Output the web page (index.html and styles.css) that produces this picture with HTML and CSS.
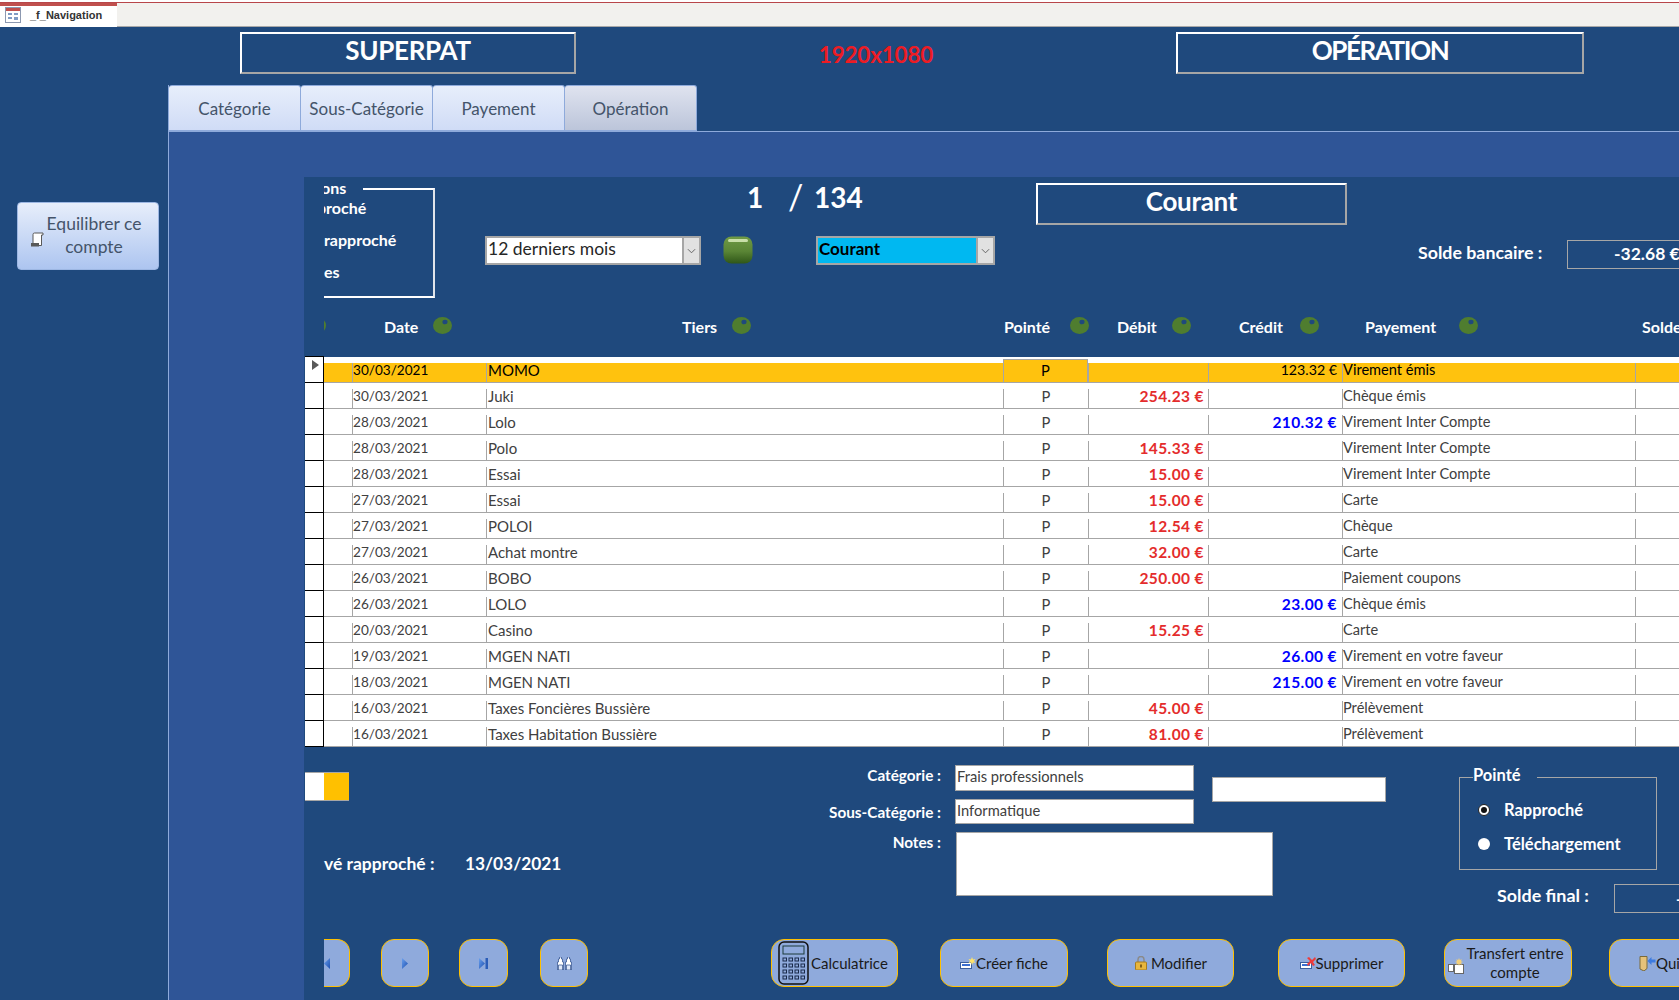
FILE: index.html
```html
<!DOCTYPE html>
<html lang="fr">
<head>
<meta charset="utf-8">
<title>_f_Navigation</title>
<link rel="stylesheet" href="styles.css">
</head>
<body>
<svg class="defs" width="0" height="0" aria-hidden="true">
  <defs>
    <linearGradient id="tri" x1="0" y1="0" x2="1" y2="1"><stop offset="0" stop-color="#6aa0ee"/><stop offset="1" stop-color="#1c4fb0"/></linearGradient>
    <symbol id="olive" viewBox="0 0 19 17">
      <ellipse cx="9.5" cy="8.5" rx="9.5" ry="8.5" fill="#4f7d2f"/>
      <ellipse cx="12" cy="5" rx="2.6" ry="2.3" fill="#1f497d"/>
    </symbol>
  </defs>
</svg>

<header class="topbar">
  <div class="doc-tab">
    <svg class="doc-icon" viewBox="0 0 16 16"><rect x=".5" y=".5" width="15" height="15" fill="#fff" stroke="#8c98b0"/><rect x="1" y="1" width="14" height="3" fill="#c0504d"/><path d="M3 6h4v2H3zM3 10h4v2H3zM9 6h4v2H9zM9 10h4v3H9z" fill="#7f9bc4"/></svg>
    <span>_f_Navigation</span>
  </div>
</header>

<section class="titles">
  <div class="title-box title-super">SUPERPAT</div>
  <div class="resolution">1920x1080</div>
  <div class="title-box title-oper">OPÉRATION</div>
</section>

<main class="workspace">
  <aside class="side">
    <button class="balance-btn">
      <svg class="scroll-icon" viewBox="0 0 14 15"><path d="M3 13V2.500A1.500 1.500 0 0 1 4.500 1H13v2h-1.500v10.500H3z" fill="#fff" stroke="#595959"/><rect x="1" y="11" width="8" height="3.500" fill="#595959"/></svg>
      <span>Equilibrer ce compte</span>
    </button>
  </aside>

  <div class="content">
    <nav class="tabs">
      <div class="tab">Catégorie</div>
      <div class="tab">Sous-Catégorie</div>
      <div class="tab">Payement</div>
      <div class="tab tab-active">Opération</div>
    </nav>

    <div class="panel">
      <div class="form">
        <div class="filters">
          <div class="group">
            <div class="opt opt-legend"><span class="cut3">ons</span></div>
            <div class="opt opt-1"><span class="cut6">proché</span></div>
            <div class="opt opt-2"><span>rapproché</span></div>
            <div class="opt opt-2"><span>es</span></div>
          </div>
          <div class="filter-main">
            <div class="filter-top">
              <div class="counter"><span class="c-cur">1</span><span class="c-sep">/</span><span>134</span></div>
              <div class="title-box account-box">Courant</div>
            </div>
            <div class="filter-bottom">
              <div class="combo combo-period"><span class="combo-text">12 derniers mois</span><span class="combo-btn"><svg viewBox="0 0 10 6"><path d="M1 1l4 4 4-4" fill="none" stroke="#595959"/></svg></span></div>
              <svg class="green-btn" viewBox="0 0 30 28">
                <defs><linearGradient id="gb" x1="0" y1="0" x2="0" y2="1"><stop offset="0" stop-color="#6f9a45"/><stop offset=".55" stop-color="#5a8535"/><stop offset="1" stop-color="#2f5618"/></linearGradient></defs>
                <rect x=".5" y=".5" width="29" height="27" rx="8" fill="url(#gb)"/>
                <rect x="5" y="3" width="20" height="3" rx="1.500" fill="#c9dfa9"/>
              </svg>
              <div class="combo combo-account"><span class="combo-text">Courant</span><span class="combo-btn"><svg viewBox="0 0 10 6"><path d="M1 1l4 4 4-4" fill="none" stroke="#595959"/></svg></span></div>
              <div class="bank-label">Solde bancaire :</div>
              <div class="bank-value">-32.68 €</div>
            </div>
          </div>
        </div>

        <div class="col-heads">
          <svg class="olive olive-cut" viewBox="17 0 2 17"><use href="#olive" width="19" height="17"/></svg>
          <span>Date</span><svg class="olive"><use href="#olive"/></svg>
          <span>Tiers</span><svg class="olive"><use href="#olive"/></svg>
          <span>Pointé</span><svg class="olive"><use href="#olive"/></svg>
          <span>Débit</span><svg class="olive"><use href="#olive"/></svg>
          <span>Crédit</span><svg class="olive"><use href="#olive"/></svg>
          <span>Payement</span><svg class="olive"><use href="#olive"/></svg>
          <span>Solde</span>
        </div>

        <div class="table">
          <div class="row row-current"><div class="sel sel-current"></div><div class="cell first"></div><div class="cell date">30/03/2021</div><div class="cell">MOMO</div><div class="cell pt focus">P</div><div class="cell"></div><div class="cell amt plain">123.32 €</div><div class="cell">Virement émis</div><div class="cell"></div></div>
          <div class="row"><div class="sel"></div><div class="cell first"></div><div class="cell date">30/03/2021</div><div class="cell">Juki</div><div class="cell pt">P</div><div class="cell amt deb">254.23 €</div><div class="cell"></div><div class="cell">Chèque émis</div><div class="cell"></div></div>
          <div class="row"><div class="sel"></div><div class="cell first"></div><div class="cell date">28/03/2021</div><div class="cell">Lolo</div><div class="cell pt">P</div><div class="cell"></div><div class="cell amt cre">210.32 €</div><div class="cell">Virement Inter Compte</div><div class="cell"></div></div>
          <div class="row"><div class="sel"></div><div class="cell first"></div><div class="cell date">28/03/2021</div><div class="cell">Polo</div><div class="cell pt">P</div><div class="cell amt deb">145.33 €</div><div class="cell"></div><div class="cell">Virement Inter Compte</div><div class="cell"></div></div>
          <div class="row"><div class="sel"></div><div class="cell first"></div><div class="cell date">28/03/2021</div><div class="cell">Essai</div><div class="cell pt">P</div><div class="cell amt deb">15.00 €</div><div class="cell"></div><div class="cell">Virement Inter Compte</div><div class="cell"></div></div>
          <div class="row"><div class="sel"></div><div class="cell first"></div><div class="cell date">27/03/2021</div><div class="cell">Essai</div><div class="cell pt">P</div><div class="cell amt deb">15.00 €</div><div class="cell"></div><div class="cell">Carte</div><div class="cell"></div></div>
          <div class="row"><div class="sel"></div><div class="cell first"></div><div class="cell date">27/03/2021</div><div class="cell">POLOI</div><div class="cell pt">P</div><div class="cell amt deb">12.54 €</div><div class="cell"></div><div class="cell">Chèque</div><div class="cell"></div></div>
          <div class="row"><div class="sel"></div><div class="cell first"></div><div class="cell date">27/03/2021</div><div class="cell">Achat montre</div><div class="cell pt">P</div><div class="cell amt deb">32.00 €</div><div class="cell"></div><div class="cell">Carte</div><div class="cell"></div></div>
          <div class="row"><div class="sel"></div><div class="cell first"></div><div class="cell date">26/03/2021</div><div class="cell">BOBO</div><div class="cell pt">P</div><div class="cell amt deb">250.00 €</div><div class="cell"></div><div class="cell">Paiement coupons</div><div class="cell"></div></div>
          <div class="row"><div class="sel"></div><div class="cell first"></div><div class="cell date">26/03/2021</div><div class="cell">LOLO</div><div class="cell pt">P</div><div class="cell"></div><div class="cell amt cre">23.00 €</div><div class="cell">Chèque émis</div><div class="cell"></div></div>
          <div class="row"><div class="sel"></div><div class="cell first"></div><div class="cell date">20/03/2021</div><div class="cell">Casino</div><div class="cell pt">P</div><div class="cell amt deb">15.25 €</div><div class="cell"></div><div class="cell">Carte</div><div class="cell"></div></div>
          <div class="row"><div class="sel"></div><div class="cell first"></div><div class="cell date">19/03/2021</div><div class="cell">MGEN NATI</div><div class="cell pt">P</div><div class="cell"></div><div class="cell amt cre">26.00 €</div><div class="cell">Virement en votre faveur</div><div class="cell"></div></div>
          <div class="row"><div class="sel"></div><div class="cell first"></div><div class="cell date">18/03/2021</div><div class="cell">MGEN NATI</div><div class="cell pt">P</div><div class="cell"></div><div class="cell amt cre">215.00 €</div><div class="cell">Virement en votre faveur</div><div class="cell"></div></div>
          <div class="row"><div class="sel"></div><div class="cell first"></div><div class="cell date">16/03/2021</div><div class="cell">Taxes Foncières Bussière</div><div class="cell pt">P</div><div class="cell amt deb">45.00 €</div><div class="cell"></div><div class="cell">Prélèvement</div><div class="cell"></div></div>
          <div class="row"><div class="sel"></div><div class="cell first"></div><div class="cell date">16/03/2021</div><div class="cell">Taxes Habitation Bussière</div><div class="cell pt">P</div><div class="cell amt deb">81.00 €</div><div class="cell"></div><div class="cell">Prélèvement</div><div class="cell"></div></div>
        </div>

        <div class="details">
          <div class="d-left">
            <div class="flag"><span class="flag-white"></span><span class="flag-orange"></span></div>
            <div class="statement"><span class="statement-label">vé rapproché :</span><span class="statement-date">13/03/2021</span></div>
          </div>
          <div class="d-fields">
            <label class="f-label f-l1">Catégorie :</label>
            <div class="field f-i1">Frais professionnels</div>
            <div class="field f-extra"></div>
            <label class="f-label f-l2">Sous-Catégorie :</label>
            <div class="field f-i2">Informatique</div>
            <label class="f-label f-l3">Notes :</label>
            <div class="field f-notes"></div>
          </div>
          <div class="d-right">
            <fieldset class="pointe">
              <legend>Pointé</legend>
              <div class="radio-row"><span class="radio radio-on"></span><span>Rapproché</span></div>
              <div class="radio-row"><span class="radio"></span><span>Téléchargement</span></div>
            </fieldset>
            <div class="final"><span class="final-label">Solde final :</span><span class="final-value">-</span></div>
          </div>
        </div>

        <div class="actions">
          <button class="btn nav-cut"><svg class="ic-nav" viewBox="0 0 6 11"><path d="M6 0v11L0 5.500z" fill="url(#tri)"/></svg></button>
          <button class="btn nav b-next"><svg class="ic-nav" viewBox="0 0 6 11"><path d="M0 0v11l6-5.500z" fill="url(#tri)"/></svg></button>
          <button class="btn nav b-last"><svg class="ic-last" viewBox="0 0 9 11"><path d="M0 0v11l6-5.500z" fill="url(#tri)"/><rect x="6.500" width="2.500" height="11" fill="#2a5cb8"/></svg></button>
          <button class="btn nav b-find"><svg class="ic-bino" viewBox="0 0 15 13"><path d="M2.500 0h2v2h1v3h1v8H.5V5h1V2h1zM10.500 0h2v2h1v3h1v8h-6V5h1V2h1z" fill="#fff" stroke="#2a4a8a" stroke-width=".7"/><path d="M1.500 8h4v5h-4zM9.500 8h4v5h-4z" fill="#dfe8f8" stroke="#2a4a8a" stroke-width=".7"/></svg></button>
          <button class="btn cmd b-calc">
            <svg class="ic-calc" viewBox="0 0 31 44">
              <rect x="1" y="1" width="29" height="42" rx="5" fill="#8faadc" stroke="#111" stroke-width="1.500"/>
              <rect x="5" y="5" width="21" height="8" fill="#8faadc" stroke="#1c3a3a"/>
              <g fill="none" stroke="#1a2a4a"><rect x="5" y="17" width="3.500" height="3"/><rect x="11" y="17" width="3.500" height="3"/><rect x="17" y="17" width="3.500" height="3"/><rect x="23" y="17" width="3.500" height="3"/><rect x="5" y="23" width="3.500" height="3"/><rect x="11" y="23" width="3.500" height="3"/><rect x="17" y="23" width="3.500" height="3"/><rect x="23" y="23" width="3.500" height="3"/><rect x="5" y="29" width="3.500" height="3"/><rect x="11" y="29" width="3.500" height="3"/><rect x="17" y="29" width="3.500" height="3"/><rect x="23" y="29" width="3.500" height="3"/><rect x="5" y="35" width="3.500" height="3"/><rect x="11" y="35" width="3.500" height="3"/><rect x="17" y="35" width="3.500" height="3"/><rect x="23" y="35" width="3.500" height="3"/></g>
            </svg>
            <span>Calculatrice</span>
          </button>
          <button class="btn cmd b-new">
            <svg class="ic-small" viewBox="0 0 16 12"><rect x=".5" y="5.500" width="11" height="6" fill="#fff" stroke="#3b5f9e"/><rect x="2" y="7" width="8" height="2" fill="#3c6fd0"/><path d="M12 0l1 2.500L15.500 2 14 4l1.500 2-2.500-.5L12 8l-1-2.500L8.500 6 10 4 8.500 2l2.500.5z" fill="#ffe36b"/></svg>
            <span>Créer fiche</span>
          </button>
          <button class="btn cmd b-mod">
            <svg class="ic-lock" viewBox="0 0 14 14"><path d="M4 6V3.500a3 3 0 0 1 6 0V6" fill="none" stroke="#8a8a8a" stroke-width="1.500"/><rect x="1.500" y="6" width="11" height="8" rx="1" fill="#e8b63c" stroke="#a77c1e"/><rect x="6.200" y="8.500" width="1.600" height="3" fill="#6b4c10"/></svg>
            <span>Modifier</span>
          </button>
          <button class="btn cmd b-del">
            <svg class="ic-small" viewBox="0 0 16 12"><rect x=".5" y="5.500" width="11" height="6" fill="#fff" stroke="#3b5f9e"/><rect x="2" y="7" width="8" height="2" fill="#3c6fd0"/><path d="M7 1l2-1 3 3 3-3 1 2-3 3 2 3-2 1-2-3-3 3-1-2 3-3z" fill="#ee3b3b"/></svg>
            <span>Supprimer</span>
          </button>
          <button class="btn cmd b-transfer">
            <svg class="ic-transfer" viewBox="0 0 16 16"><rect x=".5" y="6.500" width="5" height="7" fill="#fff" stroke="#666"/><rect x="6.500" y="6.500" width="9" height="9" fill="#fff" stroke="#666"/><path d="M11 0l.8 2 2-.8-.8 2 2 .8-2 .8.800 2-2-.8-.8 2-.8-2-2 .8.800-2-2-.8 2-.8-.8-2 2 .8z" fill="#f2cf7a"/></svg>
            <span class="two-line">Transfert entre compte</span>
          </button>
          <button class="btn cmd b-quit">
            <svg class="ic-quit" viewBox="0 0 17 15"><path d="M1 .5h7v12l-3 2.500-4-2z" fill="#e5c27a" stroke="#7a6a3a"/><path d="M16.500 3.500h-4V1L8.500 5l4 4V6.500h4z" fill="#3c7be0"/></svg>
            <span>Quitter</span>
          </button>
        </div>
      </div>
    </div>
  </div>
</main>
</body>
</html>
```

FILE: styles.css
```css
* { box-sizing: border-box; }
html, body { margin: 0; padding: 0; }
body {
  width: 1679px;
  height: 1000px;
  overflow: hidden;
  background: #1f497d;
  font-family: Lato, "Noto Sans", sans-serif;
  color: #fff;
  display: flex;
  flex-direction: column;
}
.defs { position: absolute; }
button { font-family: inherit; margin: 0; padding: 0; cursor: default; }

/* top bar */
.topbar {
  height: 27px;
  flex: none;
  background: #f2f1ee;
  box-shadow: inset 0 2px 0 #fff, inset 0 3px 0 #b8464a;
  border-bottom: 1px solid #a8a8a8;
  padding-top: 3px;
}
.doc-tab {
  width: 117px;
  height: 24px;
  background: #fff;
  border-top: 3px solid #c0504d;
  display: flex;
  align-items: center;
  gap: 9px;
  padding: 0 0 3px 5px;
  font: bold 11px "Liberation Sans", sans-serif;
  color: #333;
}
.doc-icon { width: 16px; height: 16px; flex: none; }

/* title strip */
.titles {
  height: 58px;
  flex: none;
  display: flex;
  align-items: flex-start;
  padding-left: 240px;
  padding-top: 5px;
}
.title-box {
  border: 2px solid #fff;
  border-right-color: #a6a6a6;
  border-bottom-color: #a6a6a6;
  height: 42px;
  font-weight: 700;
  font-size: 26px;
  letter-spacing: -.3px;
  line-height: 33px;
  text-align: center;
}
.title-super { width: 336px; }
.title-oper { width: 408px; letter-spacing: -1.400px; }
.resolution {
  width: 600px;
  text-align: center;
  color: #ed1c24;
  font-size: 22.500px;
  font-weight: 700;
  letter-spacing: -.2px;
  padding-top: 9px;
  line-height: 28px;
}

/* workspace */
.workspace { flex: 1; min-height: 0; display: flex; }
.side { width: 168px; flex: none; padding: 117px 0 0 17px; }
.balance-btn {
  width: 142px;
  height: 68px;
  border: 1px solid #9db7e3;
  border-radius: 4px;
  background: linear-gradient(#e7eefb, #adc5f0);
  color: #44546a;
  font-size: 17.500px;
  line-height: 23px;
  display: flex;
  align-items: center;
  padding: 0 0 2px 12px;
}
.balance-btn span { width: 100px; text-align: center; }
.scroll-icon { width: 14px; height: 15px; flex: none; margin-top: 9px; }

.content { flex: 1; min-width: 0; display: flex; flex-direction: column; border-left: 1px solid #8eaadb; }
.tabs { height: 46px; flex: none; display: flex; }
.tab {
  width: 132px;
  height: 46px;
  border: 1px solid #8eaadb;
  border-left: 0;
  border-radius: 3px 3px 0 0;
  background: linear-gradient(#e7eefb, #d0dcf6);
  color: #44546a;
  font-size: 17px;
  text-align: center;
  line-height: 46px;
}
.tab-active { background: linear-gradient(#dfe3ef, #bcc5da); }

.panel {
  flex: 1;
  min-height: 0;
  background: #2f5597;
  border-top: 1px solid #8eaadb;
  padding: 45px 0 0 135px;
  display: flex;
}
.form { flex: 1; min-width: 0; background: #1f497d; overflow: hidden; }

/* filters */
.filters { height: 128px; display: flex; padding-left: 20px; }
.group {
  width: 111px;
  height: 110px;
  flex: none;
  margin-top: 11px;
  border: 2px solid #fff;
  border-left: 0;
  border-right-color: #e0e4ea;
  font-weight: 700;
  font-size: 16px;
  line-height: 20px;
}
.opt { overflow: hidden; height: 20px; white-space: nowrap; }
.opt-legend { width: 39px; height: 18px; margin-top: -11px; line-height: 17px; background: #1f497d; }
.opt-1 { margin-top: 1px; }
.opt-2 { margin-top: 12px; }
.cut3 { margin-left: -3px; }
.cut6 { margin-left: -7px; }

.filter-main { flex: 1; min-width: 0; }
.filter-top { height: 42px; margin-top: 6px; display: flex; }
.counter { width: 601px; flex: none; padding-left: 312px; font-size: 28px; font-weight: 700; line-height: 28px; display: flex; }
.c-cur { width: 41px; }
.c-sep { width: 26px; font-size: 34px; font-weight: 400; }
.account-box { width: 311px; flex: none; }
.filter-bottom { height: 30px; margin-top: 11px; padding-left: 50px; display: flex; align-items: flex-start; }
.combo { height: 29px; flex: none; border: 2px solid #a6a6a6; background: #fff; display: flex; color: #262626; }
.combo-period { width: 216px; font-size: 17.500px; line-height: 22px; }
.combo-account { width: 179px; margin-left: 63px; background: #00b8f1; color: #000; font-size: 17px; font-weight: 700; line-height: 21px; }
.combo-text { flex: 1; min-width: 0; padding-left: 1px; }
.combo-btn { width: 17px; flex: none; background: #e1e1e1; border-left: 2px solid #a6a6a6; display: flex; align-items: center; justify-content: center; }
.combo-btn svg { width: 9px; height: 6px; }
.green-btn { width: 30px; height: 28px; margin-left: 22px; flex: none; }
.bank-label { width: 149px; margin-left: 423px; margin-top: 4px; font-weight: 700; font-size: 17.800px; line-height: 24px; flex: none; white-space: nowrap; }
.bank-value { width: 200px; height: 29px; margin-top: 4px; flex: none; border: 1px solid #a6a6a6; padding-left: 46px; font-size: 17.500px; font-weight: 700; line-height: 26px; white-space: nowrap; }

/* column heads */
.col-heads {
  height: 52px;
  padding: 12px 0 0 20px;
  display: grid;
  grid-template-columns: 60px 49px 249px 50px 272px 66px 47px 55px 67px 61px 65px 94px 183px 40px;
  font-weight: 700;
  font-size: 16px;
  line-height: 20px;
  align-items: start;
  white-space: nowrap;
}
.olive { width: 19px; height: 17px; display: block; }
.olive-cut { width: 2px; }

/* table */
.table { margin-left: 1px; background: #fff; color: #404040; font-size: 14.700px; }
.row {
  height: 26px;
  display: grid;
  grid-template-columns: 19px 28px 134px 517px 85px 120px 134px 293px 44px;
}
.sel { border-right: 1px solid #000; border-bottom: 1px solid #000; background: #fff; }
.sel-current { border-top: 1px solid #000; margin-top: -1px; height: 27px; display: flex; padding: 3px 0 0 7px; }
.sel-current::before { content: ""; width: 0; height: 0; border-left: 7px solid #595959; border-top: 5.500px solid transparent; border-bottom: 5.500px solid transparent; }
.cell {
  margin-top: 6px;
  height: 20px;
  border-left: 1px solid #a6a6a6;
  border-bottom: 1px solid #a6a6a6;
  padding-left: 1px;
  line-height: 14px;
  white-space: nowrap;
}
.first { border-left: 0; }
.date { font-size: 13.600px; padding-left: 0; }
.row .cell:nth-child(4) { font-size: 15px; }
.row .cell:nth-child(8) { font-size: 14.600px; padding-left: 0; }
.pt { text-align: center; padding-left: 0; }
.amt { text-align: right; padding: 0 4px 0 0; font-weight: 700; font-size: 15.500px; letter-spacing: .4px; }
.deb { color: #e42c2c; }
.cre { color: #0000ff; padding-right: 5px; }
.plain { color: #000; font-weight: 400; font-size: 14.200px; letter-spacing: 0; padding-right: 5px; }
.row-current .cell { background: #ffc20e; color: #000; }
.cell.focus { margin-top: 2px; height: 24px; border-top: 1px solid #a6a6a6; border-right: 1px solid #a6a6a6; padding-top: 3px; }

/* details */
.details { height: 192px; display: flex; }
.d-left { width: 501px; flex: none; padding-left: 1px; }
.flag { width: 44px; height: 29px; margin-top: 25px; display: flex; border: 1px solid #a6a6a6; border-left: 0; border-right: 0; }
.flag-white { width: 19px; background: #fff; }
.flag-orange { flex: 1; background: #ffc000; }
.statement { margin-top: 52px; padding-left: 19px; display: flex; font-weight: 700; line-height: 22px; white-space: nowrap; }
.statement-label { width: 141px; font-size: 17.500px; }
.statement-date { font-size: 17.300px; }

.d-fields {
  width: 581px;
  flex: none;
  margin-top: 18px;
  height: 131px;
  display: grid;
  grid-template-columns: 136px 14px 239px 18px 174px;
  grid-template-rows: 26px 25px 64px;
  row-gap: 8px;
}
.f-label { grid-column: 1; text-align: right; font-weight: 700; font-size: 15.300px; line-height: 20px; white-space: nowrap; }
.f-l1 { grid-row: 1; }
.f-l2 { grid-row: 2; margin-top: 3px; }
.f-l3 { grid-row: 3; }
.field { background: #fff; border: 1px solid #a6a6a6; color: #404040; font-size: 14.700px; line-height: 20px; padding-left: 1px; }
.f-i1 { grid-column: 3; grid-row: 1; }
.f-i2 { grid-column: 3; grid-row: 2; }
.f-extra { grid-column: 5; grid-row: 1 / span 2; height: 25px; margin-top: 12px; }
.f-notes { grid-column: 3 / span 3; grid-row: 3; width: 317px; margin-left: 1px; }

.d-right { flex: 1; min-width: 0; margin-left: 73px; }
.pointe {
  width: 198px;
  height: 104px;
  margin: 19px 0 0;
  padding: 0 0 0 18px;
  border: 1px solid #a6a6a6;
  font-weight: 700;
  font-size: 16.500px;
}
.pointe legend { margin-left: -5px; padding: 0 16px 4px 0; line-height: 18px; }
.radio-row { height: 20px; margin-top: 12px; display: flex; align-items: center; gap: 14px; line-height: 20px; }
.radio-row + .radio-row { margin-top: 14px; }
.radio { width: 12px; height: 12px; border-radius: 50%; background: #fff; flex: none; display: flex; align-items: center; justify-content: center; }
.radio-on { border: 1px solid #222; }
.radio-on::before { content: ""; width: 6px; height: 6px; border-radius: 50%; background: #111; }
.final { margin-top: 13px; padding-left: 38px; display: flex; }
.final-label { width: 117px; font-weight: 700; font-size: 17.900px; line-height: 24px; white-space: nowrap; flex: none; }
.final-value { width: 100px; height: 29px; margin-top: 1px; flex: none; border: 1px solid #a6a6a6; padding-left: 61px; font-weight: 700; font-size: 16px; line-height: 28px; }

/* action buttons */
.actions { height: 48px; padding-left: 20px; display: flex; color: #1a1a1a; }
.btn {
  height: 48px;
  flex: none;
  background: #8faadc;
  border: 1.500px solid #ffc000;
  border-radius: 13px;
  color: #1a1a1a;
  font-size: 15px;
  line-height: 20px;
  display: flex;
  align-items: center;
  justify-content: center;
  white-space: nowrap;
}
.nav-cut { width: 26px; border-left: 0; border-radius: 0 13px 13px 0; justify-content: flex-start; }
.nav { width: 48px; }
.cmd { width: 127px; }
.b-next { margin-left: 31px; }
.b-last { margin-left: 30px; width: 49px; }
.b-find { margin-left: 32px; }
.b-calc { margin-left: 183px; justify-content: flex-start; padding-left: 6px; gap: 2px; }
.b-new { margin-left: 42px; width: 128px; }
.b-mod { margin-left: 39px; }
.b-del { margin-left: 44px; }
.b-transfer { margin-left: 39px; width: 128px; justify-content: flex-start; padding-left: 3px; }
.b-quit { margin-left: 37px; justify-content: flex-start; padding-left: 29px; }
.ic-nav { width: 6px; height: 11px; }
.ic-last { width: 9px; height: 11px; }
.ic-bino { width: 15px; height: 13px; }
.ic-calc { width: 31px; height: 44px; flex: none; }
.ic-small { width: 16px; height: 12px; flex: none; }
.ic-lock { width: 14px; height: 14px; flex: none; margin-right: 3px; }
.ic-transfer { width: 16px; height: 16px; flex: none; margin-top: 6px; }
.ic-quit { width: 17px; height: 15px; flex: none; }
.two-line { width: 102px; white-space: normal; text-align: center; line-height: 19px; margin-top: -1px; }
```
